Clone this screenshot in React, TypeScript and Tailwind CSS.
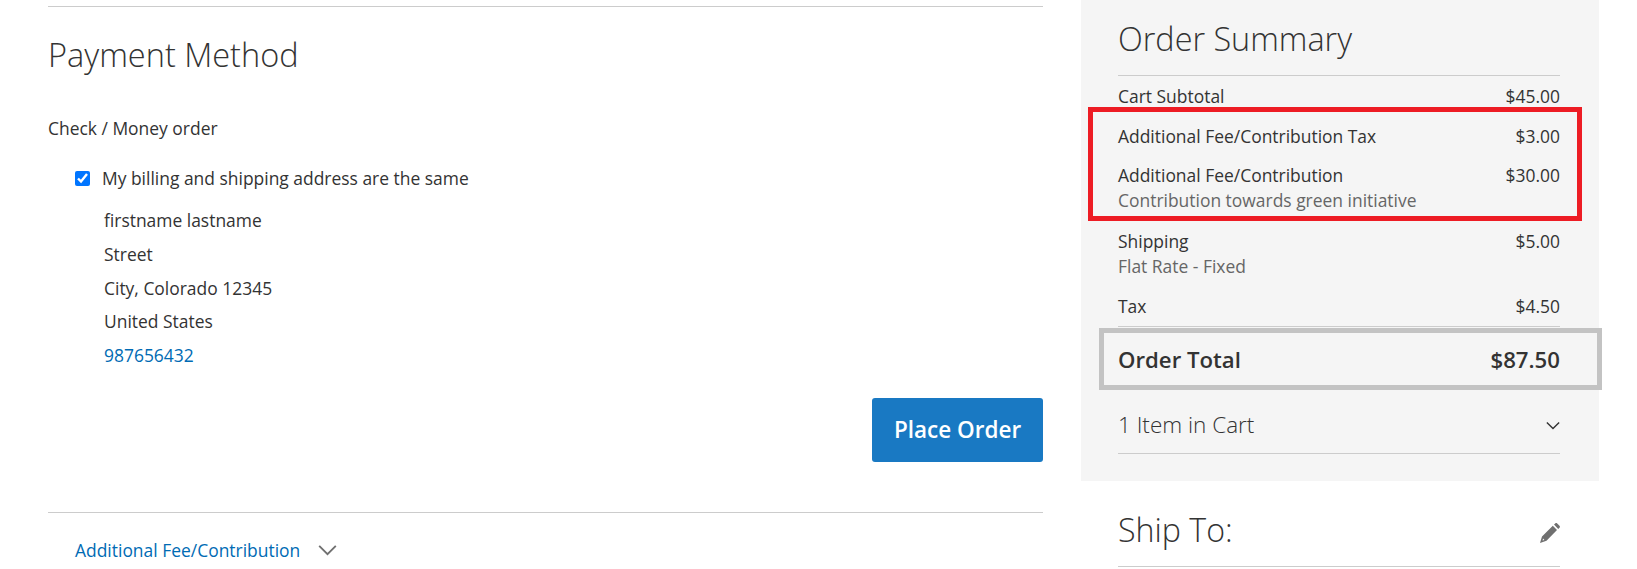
import React from "react";

function Row({ label, value, sub }: { label: string; value: string; sub?: string }) {
  return (
    <div>
      <div className="flex justify-between h-[24px] leading-[24px]">
        <span>{label}</span>
        <span>{value}</span>
      </div>
      {sub && <div className="h-[27px] leading-[27px] text-[#666666]">{sub}</div>}
    </div>
  );
}

function Chevron({ className }: { className: string }) {
  return (
    <svg viewBox="0 0 16 10" className={className} fill="none" stroke="currentColor" strokeWidth="1.6">
      <path d="M1 1.5 L8 8.5 L15 1.5" />
    </svg>
  );
}

export default function App() {
  return (
    <div className="h-[569px] overflow-hidden bg-white flex pl-[48px] text-[17.45px] text-[#333333] font-['Open_Sans',sans-serif]">
      <main className="w-[995px] pt-[6px]">
        <div className="border-t border-[#cccccc]" />
        <h2 className="mt-[28px] h-[40px] leading-[40px] text-[32.5px] font-light">Payment Method</h2>
        <p className="mt-[41px] h-[24px] leading-[24px]">Check / Money order</p>
        <div className="mt-[26px] pl-[27px]">
          <label className="flex items-center h-[24px]">
            <input type="checkbox" defaultChecked readOnly className="w-[15px] h-[15px] accent-[#0075ff] m-0" />
            <span className="ml-[12px]">My billing and shipping address are the same</span>
          </label>
          <address className="not-italic pl-[29px] mt-[14px] leading-[33.8px]">
            <div>firstname lastname</div>
            <div>Street</div>
            <div>City, Colorado 12345</div>
            <div>United States</div>
            <div className="text-[#006bb4]">987656432</div>
          </address>
        </div>
        <div className="flex justify-end mt-[25px]">
          <button className="w-[171px] h-[64px] rounded-[3px] bg-[#1979c3] text-white text-[22.5px] font-semibold">Place Order</button>
        </div>
        <div className="mt-[50px] border-t border-[#cccccc]" />
        <div className="mt-[25px] pl-[27px] flex items-center h-[24px] text-[#006bb4]">
          <span>Additional Fee/Contribution</span>
          <Chevron className="ml-[18px] w-[19px] h-[12px] text-[#707070]" />
        </div>
      </main>
      <aside className="ml-[38px] w-[518px]">
        <div className="relative bg-[#f5f5f5] h-[481px] pl-[37px] pr-[39px] pt-[16px]">
          <h2 className="h-[44px] leading-[44px] text-[32.4px] font-light">Order Summary</h2>
          <div className="mt-[15px] border-t border-[#cccccc]" />
          <div className="mt-[8px]"><Row label="Cart Subtotal" value="$45.00" /></div>
          <div className="mt-[16px]"><Row label="Additional Fee/Contribution Tax" value="$3.00" /></div>
          <div className="mt-[15px]"><Row label="Additional Fee/Contribution" value="$30.00" sub="Contribution towards green initiative" /></div>
          <div className="mt-[15px]"><Row label="Shipping" value="$5.00" sub="Flat Rate - Fixed" /></div>
          <div className="mt-[14px]"><Row label="Tax" value="$4.50" /></div>
          <div className="mt-[8px] border-t border-[#cccccc]" />
          <div className="mt-[17px] flex justify-between h-[32px] leading-[32px] text-[22.2px] font-semibold">
            <span>Order Total</span>
            <span>$87.50</span>
          </div>
          <div className="mt-[32px] flex justify-between items-center h-[34px] text-[22.5px] font-light">
            <span>1 Item in Cart</span>
            <Chevron className="w-[14px] h-[9px] text-[#333333]" />
          </div>
          <div className="mt-[11px] border-t border-[#cccccc]" />
          <div className="absolute left-[7px] right-[17px] top-[107px] h-[114px] border-[5px] border-[#ed1c24]" />
          <div className="absolute left-[18px] right-[-3px] top-[328px] h-[62px] border-[5px] border-[#c3c3c3]" />
        </div>
        <div className="pl-[37px] pr-[39px] mt-[27px] flex justify-between items-center h-[44px]">
          <h2 className="text-[32.2px] leading-[44px] font-light">Ship To:</h2>
          <svg viewBox="0 0 20 20" className="w-[20px] h-[20px] mt-[6px] text-[#707070]" fill="currentColor">
            <path fillRule="evenodd" d="M0 20 L2 13.5 L12.8 2.8 L17 7 L6.5 17.8 Z M2.6 17.6 L4.4 17 L3 15.6 Z" />
            <path d="M14 1.6 L15.2 0.5 C15.8 -0.1 16.6 -0.1 17.2 0.5 L19.5 2.8 C20.1 3.4 20.1 4.2 19.5 4.8 L18.2 5.9 Z" />
          </svg>
        </div>
        <div className="mr-[39px] mt-[14px] ml-[37px] border-t border-[#cccccc]" />
      </aside>
    </div>
  );
}
